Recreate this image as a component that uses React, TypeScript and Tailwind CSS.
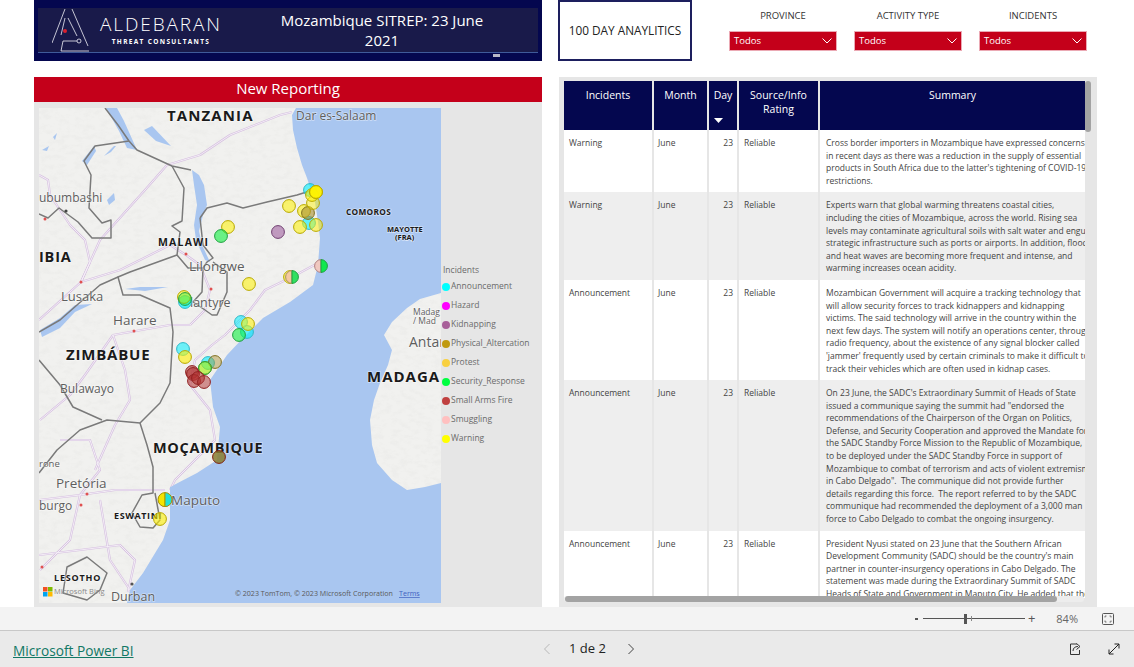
import React from "react";

const rows = [
  { inc: "Warning", bg: "bg-white", lines: ["Cross border importers in Mozambique have expressed concerns", "in recent days as there was a reduction in the supply of essential", "products in South Africa due to the latter's tightening of COVID-19", "restrictions."] },
  { inc: "Warning", bg: "bg-[#eeeeee]", lines: ["Experts warn that global warming threatens coastal cities,", "including the cities of Mozambique, across the world. Rising sea", "levels may contaminate agricultural soils with salt water and engulf", "strategic infrastructure such as ports or airports. In addition, flood", "and heat waves are becoming more frequent and intense, and", "warming increases ocean acidity."] },
  { inc: "Announcement", bg: "bg-white", lines: ["Mozambican Government will acquire a tracking technology that", "will allow security forces to track kidnappers and kidnapping", "victims. The said technology will arrive in the country within the", "next few days. The system will notify an operations center, through", "radio frequency, about the existence of any signal blocker called", "'jammer' frequently used by certain criminals to make it difficult to", "track their vehicles which are often used in kidnap cases."] },
  { inc: "Announcement", bg: "bg-[#eeeeee]", lines: ["On 23 June, the SADC's Extraordinary Summit of Heads of State", "issued a communique saying the summit had \"endorsed the", "recommendations of the Chairperson of the Organ on Politics,", "Defense, and Security Cooperation and approved the Mandate for", "the SADC Standby Force Mission to the Republic of Mozambique,", "to be deployed under the SADC Standby Force in support of", "Mozambique to combat of terrorism and acts of violent extremism", "in Cabo Delgado\".  The communique did not provide further", "details regarding this force.  The report referred to by the SADC", "communique had recommended the deployment of a 3,000 man", "force to Cabo Delgado to combat the ongoing insurgency."] },
  { inc: "Announcement", bg: "bg-white", lines: ["President Nyusi stated on 23 June that the Southern African", "Development Community (SADC) should be the country's main", "partner in counter-insurgency operations in Cabo Delgado. The", "statement was made during the Extraordinary Summit of SADC", "Heads of State and Government in Maputo City. He added that the"] },
];

const legend = [
  ["Announcement", "bg-[#00ffff]"],
  ["Hazard", "bg-[#ff00ff]"],
  ["Kidnapping", "bg-[#a8609a]"],
  ["Physical_Altercation", "bg-[#c09a10]"],
  ["Protest", "bg-[#f8d040]"],
  ["Security_Response", "bg-[#00ff40]"],
  ["Small Arms Fire", "bg-[#c04040]"],
  ["Smuggling", "bg-[#ffc0c0]"],
  ["Warning", "bg-[#ffff00]"],
];

const Y = ["#fff200", "#b8a800"];
const C = ["#00f0ff", "#30b8c8"];
const G = ["#10f040", "#20a040"];
const R = ["#b03030", "#902020"];
const P = ["#a060a0", "#704070"];
const O = ["#a89030", "#807020"];

const bubbles: [number, number, string[], number][] = [
  [228, 227, Y, 0.55], [221, 236, G, 0.6], [278, 232, P, 0.6], [289, 206, Y, 0.55],
  [310, 190, C, 0.6], [309, 223, C, 0.6], [300, 227, Y, 0.55], [316, 225, Y, 0.5],
  [304, 211, Y, 0.55], [308, 213, O, 0.6], [313, 203, Y, 0.45], [312, 195, Y, 0.6],
  [316, 192, Y, 0.8], [316, 192, Y, 0.8], [249, 284, Y, 0.55], [185, 302, C, 0.7],
  [184, 297, Y, 0.55], [185, 299, G, 0.35], [241, 322, C, 0.55], [247, 332, C, 0.6],
  [239, 335, G, 0.6], [248, 324, Y, 0.55], [183, 349, C, 0.55], [185, 357, Y, 0.6],
  [208, 363, C, 0.6], [215, 362, O, 0.45], [205, 368, Y, 0.55], [205, 368, G, 0.25], [192, 372, R, 0.55],
  [193, 374, R, 0.55], [194, 381, R, 0.55], [198, 378, R, 0.55], [204, 382, R, 0.5],
  [219, 457, ["#887c30", "#802010"], 0.85], [160, 519, Y, 0.6],
];

const borders = [
  "M129 141 L95 146 L84 161 L91 175 L89 208 L102 223 L111 220 L111 238 L92 238 L78 222 L59 208 L48 218 L39 214",
  "M105 108 L118 125 L129 141 L137 150 L172 166 L191 170",
  "M172 166 L184 188 L182 221 L172 226 L180 232 L177 255 L130 272 L118 277 L123 295 L140 295 L170 308 L173 332 L170 383 L160 403 L140 423",
  "M200 218 L207 208 L227 203 L243 208 L267 202 L297 195 L313 190",
  "M200 218 L203 245 L213 258 L207 262 L203 268 L188 268 L177 255",
  "M203 268 L202 292 L193 302 L205 310 L212 315 L217 315 L227 292 L227 272 L213 262",
  "M140 423 L107 420 L80 430 L57 450 L39 473",
  "M39 360 L60 385 L73 407 L102 420",
  "M140 423 L147 445 L153 467 L153 493 L142 495 L132 513 L140 527 L153 528 L160 520 L155 493",
  "M87 557 L107 573 L100 590 L87 600 L63 593 L67 567 Z",
  "M118 277 L100 285 L85 298 L60 320 L39 332",
];

const roads = [
  "M81 282 L120 270 L170 245 L186 255",
  "M81 282 L100 240 L145 190 L167 165 L200 155 L230 135 L280 115 L292 112",
  "M186 255 L200 265 L210 290 L205 310 L190 325",
  "M320 262 L292 277 L265 290 L250 310 L225 335 L212 345 L195 360 L190 385 L210 410 L215 440 L190 465 L175 480 L170 490",
  "M39 500 L80 495 L115 490 L165 490",
  "M80 495 L100 470 L90 440 L60 440",
  "M80 495 L70 540 L40 570",
  "M100 500 L110 560 L130 590",
  "M39 555 L80 550 L120 545 L135 560 L128 592",
  "M113 335 L85 375 L70 395 L40 420",
  "M113 335 L125 370 L130 400 L115 425 L95 470",
  "M113 335 L170 325 L190 325",
  "M39 320 L81 282",
  "M39 175 L48 180 L50 195 L70 225 L85 240 L90 262 L81 282",
];

const lakes = [
  "M192 170 L199 175 L204 185 L207 205 L203 215 L199 231 L202 245 L210 262 L205 260 L196 240 L194 225 L197 205 L194 185 Z",
  "M106 108 L117 108 L124 121 L137 150 L127 148 L119 131 Z",
  "M94 146 L82 161 L87 165 L96 151 Z",
  "M114 146 L104 156 L111 152 L116 146 Z",
  "M144 130 L152 126 L171 146 L156 141 Z",
  "M107 200 L114 193 L115 200 L109 205 Z",
  "M42 150 L49 146 L47 151 Z",
  "M53 137 L57 133 L55 140 Z",
  "M40 330 L60 318 L75 305 L92 304 L75 312 L60 328 L42 337 Z",
  "M125 289 L140 287 L168 287 L145 291 Z",
];

const dots = [[186, 254], [81, 282], [211, 289], [134, 331], [87, 494], [81, 505], [42, 567], [45, 219]];

type L = [string, number, number, string, number, number?];
const labels: L[] = [
  ["TANZANIA", 167, 121, "b", 15, 1.1],
  ["Dar es-Salaam", 296, 120, "r", 12],
  ["COMOROS", 346, 215, "b", 8.3, 0.3],
  ["MAYOTTE", 387, 232, "b", 7.5],
  ["(FRA)", 395, 240, "b", 7.5],
  ["ubumbashi", 39, 202, "r", 12],
  ["IBIA", 39, 262, "b", 14.5, 0.8],
  ["MALAWI", 158, 246, "b", 10.5, 1.2],
  ["Lilongwe", 189, 271, "r", 13.5],
  ["Lusaka", 61, 301, "r", 13],
  ["lantyre", 190, 307, "r", 12.5],
  ["Harare", 113, 325, "r", 13.5],
  ["ZIMBÁBUE", 66, 360, "b", 15, 0.8],
  ["Bulawayo", 60, 393, "r", 12],
  ["Madag", 413, 315, "r", 8.5],
  ["/ Mad", 413, 324, "r", 8.5],
  ["Antan", 409, 347, "r", 14],
  ["MADAGA", 367, 382, "b", 15, 1],
  ["MOÇAMBIQUE", 153, 453, "b", 14.5, 0.7],
  ["rone", 39, 467, "r", 9.5],
  ["Pretória", 56, 488, "r", 13.5],
  ["burgo", 39, 510, "r", 12],
  ["Maputo", 171, 505, "r", 13.5],
  ["ESWATINI", 114, 519, "b", 9, 0.6],
  ["LESOTHO", 54, 581, "b", 9, 0.8],
  ["Durban", 111, 601, "r", 12.5],
];

function MapDrawing() {
  return (
    <svg width="402" height="495" viewBox="39 108 402 495" className="block shrink-0">
      <defs>
        <filter id="relief" x="0" y="0" width="100%" height="100%">
          <feTurbulence type="fractalNoise" baseFrequency="0.12 0.2" numOctaves="4" seed="5" />
          <feColorMatrix values="0 0 0 0 0.55  0 0 0 0 0.55  0 0 0 0 0.53  1.4 0 0 0 -0.6" />
        </filter>
        <clipPath id="land">
          <path d="M39 108 L296 108 L292 115 L293 130 L297 148 L302 165 L307 178 L315 202 L318 222 L320 238 L318 265 L313 285 L290 302 L263 318 L243 338 L227 355 L210 380 L213 407 L220 427 L217 460 L197 473 L170 487 L170 520 L163 540 L143 573 L130 590 L127 603 L39 603 Z" />
        </clipPath>
        <clipPath id="mada">
          <path d="M441 293 L420 299 L407 308 L392 322 L384 335 L392 350 L388 365 L380 383 L374 400 L370 420 L372 445 L377 463 L392 480 L407 490 L425 487 L441 483 Z" />
        </clipPath>
      </defs>
      <rect x="39" y="108" width="402" height="495" fill="#a9c6f0" />
      <rect x="39" y="108" width="402" height="495" fill="#f1f1ef" clipPath="url(#land)" />
      <rect x="39" y="108" width="402" height="495" fill="#f1f1ef" clipPath="url(#mada)" />
      <g clipPath="url(#land)">
        <rect x="39" y="108" width="402" height="495" filter="url(#relief)" opacity="0.14" />
        {lakes.map((d, i) => <path key={i} d={d} fill="#a9c6f0" />)}
        {roads.map((d, i) => <path key={i} d={d} fill="none" stroke="#d6c0e0" strokeWidth="2.2" strokeLinejoin="round" />)}
        {roads.map((d, i) => <path key={i} d={d} fill="none" stroke="#f6f2f8" strokeWidth="0.9" strokeLinejoin="round" />)}
        {borders.map((d, i) => <path key={i} d={d} fill="none" stroke="#7a7a7a" strokeWidth="1.5" strokeLinejoin="round" />)}
      </g>
      <g clipPath="url(#mada)">
        <rect x="39" y="108" width="402" height="495" filter="url(#relief)" opacity="0.14" />
      </g>
      {dots.map(([x, y], i) => <circle key={i} cx={x} cy={y} r="1.5" fill="#e05050" />)}
      <circle cx="132" cy="584" r="1.6" fill="#555" />
      <circle cx="66" cy="211" r="1.6" fill="#444" />
      <g fontFamily="'Open Sans', sans-serif">
        {labels.map(([t, x, y, k, s, ls], i) => (
          <text key={i} x={x} y={y} fontSize={s} letterSpacing={ls ?? 0} fontWeight={k === "b" ? 700 : 400}
            fill={k === "b" ? "#1a1a1a" : "#5e5e5e"} stroke="#ffffff" strokeOpacity="0.45" strokeWidth="1.5" style={{ paintOrder: "stroke" }}>
            {t}
          </text>
        ))}
      </g>
      {bubbles.map(([x, y, c, o], i) => (
        <circle key={i} cx={x} cy={y} r="6.4" fill={c[0]} fillOpacity={o} stroke={c[1]} strokeWidth="1" />
      ))}
      <path d="M321 259.6 A6.4 6.4 0 0 0 321 272.4 Z" fill="#f0c8c0" stroke="#b08080" />
      <path d="M321 259.6 A6.4 6.4 0 0 1 321 272.4 Z" fill="#10e850" stroke="#20a040" />
      <circle cx="290" cy="277" r="6.4" fill="#fff200" fillOpacity="0.5" stroke="#b8a800" />
      <path d="M292 270.6 A6.4 6.4 0 0 0 292 283.4 Z" fill="#f4c8a0" stroke="#a89060" />
      <path d="M292 270.6 A6.4 6.4 0 0 1 292 283.4 Z" fill="#30e060" stroke="#20a040" />
      <circle cx="165" cy="500" r="6.4" fill="#ff00ff" stroke="#b030b0" />
      <path d="M165 492.6 A7 7 0 0 0 165 506.6 Z" fill="#f4e400" stroke="#a89800" />
      <path d="M165 492.6 A7 7 0 0 1 165 506.6 Z" fill="#20e0d8" stroke="#a89800" />
      <rect x="43" y="587" width="4.5" height="4.5" fill="#f25022" />
      <rect x="48" y="587" width="4.5" height="4.5" fill="#7fba00" />
      <rect x="43" y="592" width="4.5" height="4.5" fill="#00a4ef" />
      <rect x="48" y="592" width="4.5" height="4.5" fill="#ffb900" />
      <text x="54" y="594" fontSize="7.5" fill="#8a8a8a" fontFamily="'Open Sans', sans-serif">Microsoft Bing</text>
      <text x="235" y="596" fontSize="7.1" fill="#5a5a5a" fontFamily="'Open Sans', sans-serif">© 2023 TomTom, © 2023 Microsoft Corporation</text>
      <text x="399" y="596" fontSize="7.1" fill="#4060c0" textDecoration="underline" fontFamily="'Open Sans', sans-serif">Terms</text>
    </svg>
  );
}

function Logo() {
  return (
    <svg width="38" height="44" viewBox="0 0 38 44" className="shrink-0">
      <g fill="none" stroke="#f0f0f6" strokeWidth="0.8">
        <path d="M0 35 L13 1" />
        <path d="M20 1 L36 38" />
        <path d="M13 10 L9 27" />
        <path d="M16 10 L25 28" />
        <path d="M9 43 H37" />
        <path d="M9 43 L11 33 H25" />
        <circle cx="27" cy="33" r="2" />
      </g>
      <circle cx="13" cy="23" r="2" fill="#d8202f" />
    </svg>
  );
}

function Slicer({ label }: { label: string }) {
  return (
    <div className="flex flex-col items-center w-[108px]">
      <div className="h-[31px] pt-[9px] text-[9.5px] leading-[13px] text-[#333]">{label}</div>
      <div className="w-full h-[20px] bg-[#c4001a] border border-[#eba9b4] flex items-center justify-between pl-[4px] pr-[3px]">
        <span className="text-[9.5px] text-white">Todos</span>
        <svg width="12" height="8" viewBox="0 0 12 8"><path d="M1.5 1.5 L6 6 L10.5 1.5" fill="none" stroke="#fff" strokeWidth="1" /></svg>
      </div>
    </div>
  );
}

function Head({ children, last }: { children: React.ReactNode; last?: boolean }) {
  return (
    <div className={`relative h-[49px] pt-[7px] text-center text-[10.5px] leading-[14px] text-white bg-[#04074f] ${last ? "" : "border-r-2 border-[#e6e6e6]"}`}>
      {children}
    </div>
  );
}

export default function App() {
  return (
    <div className="w-[1134px] h-[667px] overflow-hidden bg-white flex flex-col font-['Open_Sans',sans-serif]">
      <main className="h-[607px] shrink-0 flex flex-col pl-[34px]">
        <div className="flex h-[61px] shrink-0">
          <header className="w-[508px] h-[61px] bg-[#04074f] pt-[8px] px-[4px] relative">
            <div className="h-[45px] bg-[#191a4a] border-b border-[#3f5a9a] flex items-center">
              <div className="ml-[14px]"><Logo /></div>
              <div className="ml-[10px] w-[122px] flex flex-col items-center text-white">
                <div className="text-[19px] leading-[22px] font-light tracking-[1.9px] whitespace-nowrap">ALDEBARAN</div>
                <div className="mt-[2px] text-[6.5px] font-bold tracking-[1.35px] text-white whitespace-nowrap">THREAT CONSULTANTS</div>
              </div>
              <div className="w-[230px] ml-[45px] text-center text-[15px] leading-[20px] text-white">Mozambique SITREP: 23 June 2021</div>
            </div>
            <div className="absolute left-[459px] top-[54px] w-[7px] h-[3px] bg-[#b8b8c8]" />
          </header>
          <button className="ml-[16px] w-[134px] h-[61px] border-2 border-[#1d1f5e] bg-white text-[11.8px] text-[#222]">100 DAY ANAYLITICS</button>
          <div className="ml-[37px] flex gap-[17px]">
            <Slicer label="PROVINCE" />
            <Slicer label="ACTIVITY TYPE" />
            <Slicer label="INCIDENTS" />
          </div>
        </div>

        <div className="mt-[16px] flex gap-[17px] h-[530px]">
          <section className="w-[508px] flex flex-col">
            <h2 className="h-[25px] bg-[#c4001a] text-white text-center text-[15px] leading-[22px] font-normal">New Reporting</h2>
            <div className="flex-1 bg-[#e6e6e6] pl-[5px] pt-[6px] flex">
              <MapDrawing />
              <div className="pl-[1px] pt-[155px] text-[8.5px] text-[#6b6b6b]">
                <div className="h-[14px] leading-[13px] pl-[1px]">Incidents</div>
                <div>
                  {legend.map(([n, c]) => (
                    <div key={n} className="h-[19px] flex items-center whitespace-nowrap">
                      <span className={`w-[8px] h-[8px] rounded-full ${c} mr-[1px]`} />
                      <span>{n}</span>
                    </div>
                  ))}
                </div>
              </div>
            </div>
          </section>

          <section className="relative w-[538px] h-[530px] bg-[#e6e6e6] pl-[5px] pt-[4px]">
            <div className="w-[521px] h-[517px] overflow-hidden">
              <div className="grid grid-cols-[90px_55px_30px_81px_265px]">
                <Head>Incidents</Head>
                <Head>Month</Head>
                <Head>Day
                  <svg className="absolute left-[5px] top-[37px]" width="9" height="5" viewBox="0 0 9 5"><path d="M0 0 H9 L4.5 5 Z" fill="#fff" /></svg>
                </Head>
                <Head>Source/Info<br />Rating</Head>
                <Head last>Summary</Head>
              </div>
              {rows.map((r, i) => (
                <div key={i} className={`grid grid-cols-[90px_55px_30px_81px_265px] text-[8.5px] leading-[12.6px] text-[#444] ${r.bg}`}>
                  <div className="border-r-2 border-[#e6e6e6] pl-[5px] pt-[7px]">{r.inc}</div>
                  <div className="border-r-2 border-[#e6e6e6] pl-[4px] pt-[7px]">June</div>
                  <div className="border-r-2 border-[#e6e6e6] pr-[4px] pt-[7px] text-right">23</div>
                  <div className="border-r-2 border-[#e6e6e6] pl-[5px] pt-[7px]">Reliable</div>
                  <div className="pl-[6px] pt-[7px] pb-[5px] overflow-hidden whitespace-pre">
                    {r.lines.map((l, j) => <div key={j}>{l}</div>)}
                  </div>
                </div>
              ))}
            </div>
            <div className="absolute left-[526px] top-[4px] w-[6px] h-[51px] rounded-full bg-[#a3a3a3]" />
            <div className="absolute left-[5px] top-[519px] w-[520px] h-[6px] rounded-full bg-[#ededed]" />
            <div className="absolute left-[6px] top-[519px] w-[492px] h-[6px] rounded-full bg-[#a3a3a3]" />
          </section>
        </div>
      </main>

      <div className="h-[24px] shrink-0 bg-[#f3f3f3] border-b border-[#c8c8c8] flex items-center justify-end text-[#555]">
        <span className="w-[3px] h-[2px] bg-[#555] mr-[5px]" />
        <div className="relative w-[102px] h-[1px] bg-[#555]">
          <span className="absolute left-[41px] -top-[4px] w-[3px] h-[10px] bg-[#555]" />
          <span className="absolute left-[48px] -top-[2px] w-[1px] h-[5px] bg-[#888]" />
        </div>
        <span className="ml-[3px] text-[13px] leading-none">+</span>
        <span className="ml-[21px] text-[11px] leading-none text-[#666]">84%</span>
        <svg className="ml-[23px] mr-[19px]" width="14" height="12" viewBox="0 0 14 12" fill="none" stroke="#555"><rect x="1.5" y="0.5" width="11" height="11" rx="1" /><path d="M4 4.5 V3 H5.5 M10 4.5 V3 H8.5 M4 7.5 V9 H5.5 M10 7.5 V9 H8.5" strokeWidth="0.8" /></svg>
      </div>

      <footer className="flex-1 bg-[#eaeaea] relative flex items-center justify-center pl-[44px]">
        <a className="absolute left-[13px] top-[10px] text-[13.7px] leading-[20px] font-medium text-[#117865] underline">Microsoft Power BI</a>
        <div className="flex items-center text-[13px] text-[#222] font-medium">
          <svg width="8" height="12" viewBox="0 0 8 12" className="mr-[18px]"><path d="M6.5 1 L1.5 6 L6.5 11" fill="none" stroke="#b8b8b8" /></svg>
          <span>1 de 2</span>
          <svg width="8" height="12" viewBox="0 0 8 12" className="ml-[21px]"><path d="M1.5 1 L6.5 6 L1.5 11" fill="none" stroke="#444" /></svg>
        </div>
        <div className="absolute right-[13px] top-[11px] flex items-center gap-[25px]">
          <svg width="14" height="14" viewBox="0 0 14 14" fill="none" stroke="#333"><path d="M9 2 H2.5 V12.5 H11.5 V8" /><path d="M5 9 C5 6 7 4.5 10 4.5 M8.5 1.5 L12 4.5 L8.5 7.5" /></svg>
          <svg width="14" height="14" viewBox="0 0 14 14" fill="none" stroke="#222"><path d="M2 12 L12 2 M7.5 2 H12 V6.5 M2 7.5 V12 H6.5" /></svg>
        </div>
      </footer>
    </div>
  );
}
